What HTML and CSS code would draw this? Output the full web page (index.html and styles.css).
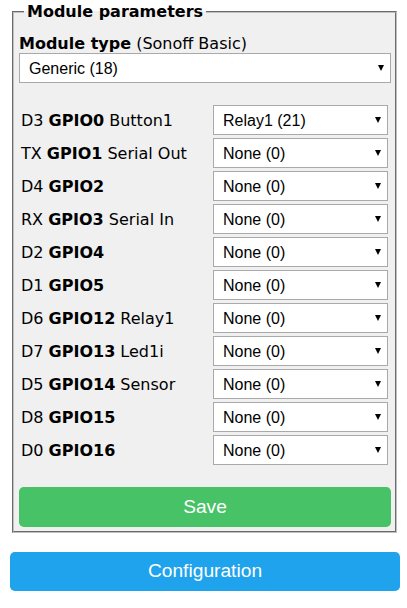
FILE: index.html
```html
<!DOCTYPE html>
<html>
<head>
<meta charset="utf-8">
<link rel="stylesheet" href="styles.css">
</head>
<body>
<div class="page">
  <fieldset class="box">
    <legend class="legend">Module parameters</legend>
    <div class="mtype"><b>Module type</b> (Sonoff Basic)</div>
    <div class="sel-wrap">
      <select class="sel"><option>Generic (18)</option></select>
    </div>
    <div class="rows">
      <div class="row"><span class="lbl">D3 <b>GPIO0</b> Button1</span><div class="sel-wrap small"><select class="sel"><option>Relay1 (21)</option></select></div></div>
      <div class="row"><span class="lbl">TX <b>GPIO1</b> Serial Out</span><div class="sel-wrap small"><select class="sel"><option>None (0)</option></select></div></div>
      <div class="row"><span class="lbl">D4 <b>GPIO2</b></span><div class="sel-wrap small"><select class="sel"><option>None (0)</option></select></div></div>
      <div class="row"><span class="lbl">RX <b>GPIO3</b> Serial In</span><div class="sel-wrap small"><select class="sel"><option>None (0)</option></select></div></div>
      <div class="row"><span class="lbl">D2 <b>GPIO4</b></span><div class="sel-wrap small"><select class="sel"><option>None (0)</option></select></div></div>
      <div class="row"><span class="lbl">D1 <b>GPIO5</b></span><div class="sel-wrap small"><select class="sel"><option>None (0)</option></select></div></div>
      <div class="row"><span class="lbl">D6 <b>GPIO12</b> Relay1</span><div class="sel-wrap small"><select class="sel"><option>None (0)</option></select></div></div>
      <div class="row"><span class="lbl">D7 <b>GPIO13</b> Led1i</span><div class="sel-wrap small"><select class="sel"><option>None (0)</option></select></div></div>
      <div class="row"><span class="lbl">D5 <b>GPIO14</b> Sensor</span><div class="sel-wrap small"><select class="sel"><option>None (0)</option></select></div></div>
      <div class="row"><span class="lbl">D8 <b>GPIO15</b></span><div class="sel-wrap small"><select class="sel"><option>None (0)</option></select></div></div>
      <div class="row"><span class="lbl">D0 <b>GPIO16</b></span><div class="sel-wrap small"><select class="sel"><option>None (0)</option></select></div></div>
    </div>
    <button class="btn green">Save</button>
  </fieldset>
  <button class="btn blue cfg">Configuration</button>
</div>
</body>
</html>
```

FILE: styles.css
```css
html, body {
  margin: 0;
  padding: 0;
  background: #fff;
}
body {
  font-family: "DejaVu Sans", Verdana, sans-serif;
  font-size: 16px;
  color: #000;
}
.page {
  width: 390px;
  padding: 2px 7px 0 10px;
  display: flex;
  flex-direction: column;
}
.box {
  margin: 0 3px 0 2px;
  padding: 0 4px 4px 5px;
  border: 2px groove #c0c0c0;
  background: #f0f0f0;
  min-width: 0;
}
.legend {
  font-weight: bold;
  line-height: 19px;
  padding: 0 3px;
  margin-left: 5px;
}
.mtype {
  margin-top: 13px;
  line-height: 19px;
  white-space: nowrap;
}
.sel-wrap {
  position: relative;
  display: flex;
}
.sel-wrap::after {
  content: "";
  position: absolute;
  right: 7px;
  top: 50%;
  margin-top: -3px;
  width: 0;
  height: 0;
  border-left: 3px solid transparent;
  border-right: 3px solid transparent;
  border-top: 6px solid #000;
  pointer-events: none;
}
.sel {
  -webkit-appearance: none;
  appearance: none;
  width: 100%;
  height: 30px;
  margin: 0;
  padding: 0 20px 0 9px;
  border: 1px solid #a9a9a9;
  border-radius: 0;
  background: #fff;
  color: #000;
  font-family: "Liberation Sans", Arial, sans-serif;
  font-size: 16px;
}
.rows {
  margin-top: 22px;
  display: flex;
  flex-direction: column;
  gap: 3px;
}
.row {
  display: flex;
  align-items: center;
  padding-left: 2px;
  padding-right: 3px;
}
.lbl {
  flex: 1;
  white-space: nowrap;
  line-height: 19px;
}
.small {
  width: 175px;
  flex: none;
}
.btn {
  display: block;
  width: 100%;
  border: 0;
  border-radius: 0.3rem;
  color: #fff;
  font-family: "Liberation Sans", Arial, sans-serif;
  font-size: 1.2rem;
  line-height: 2.4rem;
  padding: 0;
  margin: 0;
}
.green {
  background: #47c266;
  margin-top: 22px;
  height: 40px;
}
.blue {
  background: #1fa3ec;
}
.cfg {
  margin-top: 19px;
  height: 39px;
}
```
